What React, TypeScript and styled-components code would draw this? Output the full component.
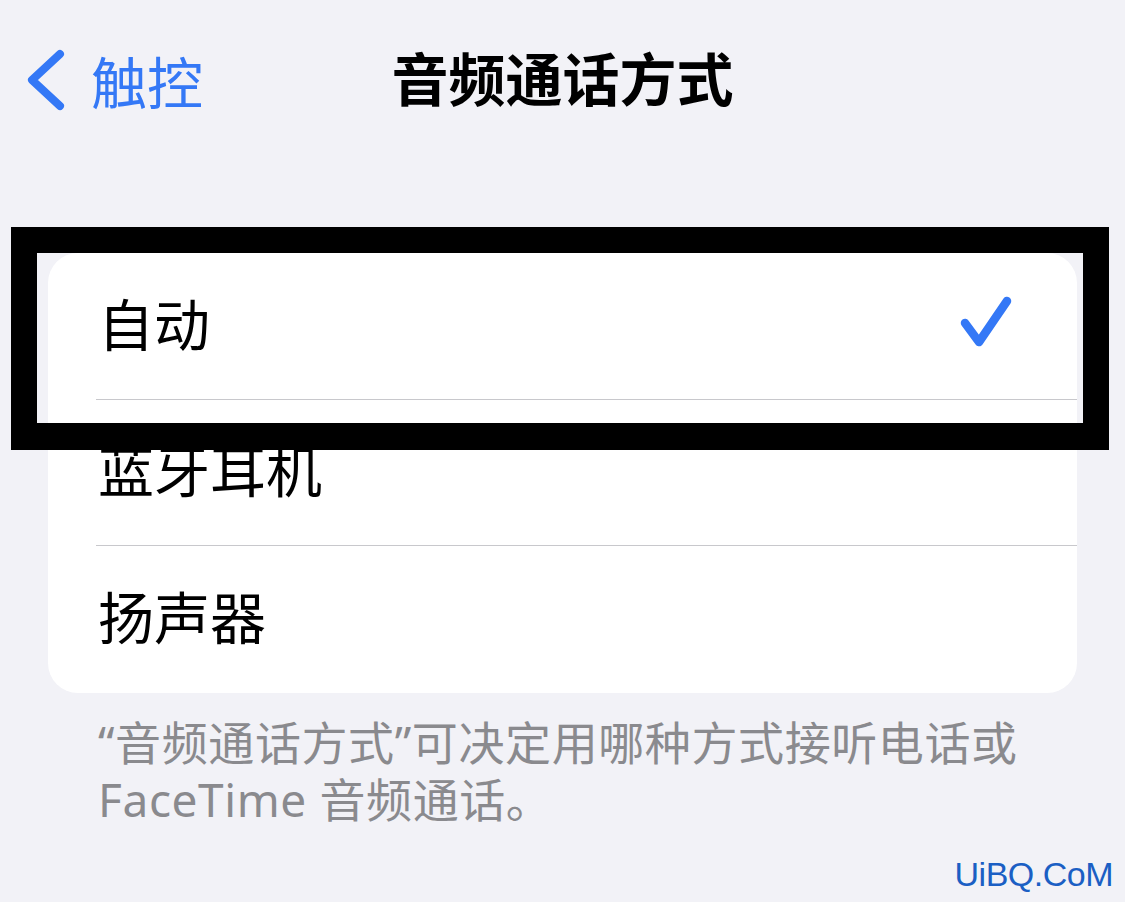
import styled, { createGlobalStyle } from "styled-components";

const GlobalStyle = createGlobalStyle`
  html, body {
    margin: 0;
    padding: 0;
    background: #f2f2f7;
  }
  * {
    box-sizing: border-box;
  }
`;

const options = [
  { label: "自动", selected: true },
  { label: "蓝牙耳机", selected: false },
  { label: "扬声器", selected: false },
];

export default function App() {
  return (
    <>
      <GlobalStyle />
      <StPage>
        <StNavBar>
          <StBackButton>
            <svg width="44" height="64" viewBox="0 0 44 64">
              <polyline
                points="36,6 8,32 36,58"
                fill="none"
                stroke="#3478f6"
                strokeWidth="8"
                strokeLinecap="round"
                strokeLinejoin="round"
              />
            </svg>
            <StBackLabel>触控</StBackLabel>
          </StBackButton>
          <StTitle>音频通话方式</StTitle>
          <div />
        </StNavBar>

        <StGroup>
          {options.map((opt, i) => (
            <StRow key={opt.label}>
              <StRowInner $last={i === options.length - 1}>
                <StRowLabel>{opt.label}</StRowLabel>
                {opt.selected && (
                  <svg width="56" height="56" viewBox="0 0 56 56">
                    <polyline
                      points="8,29 22,48 50,7"
                      fill="none"
                      stroke="#3478f6"
                      strokeWidth="8.5"
                      strokeLinecap="round"
                      strokeLinejoin="round"
                    />
                  </svg>
                )}
              </StRowInner>
            </StRow>
          ))}
        </StGroup>

        <StFooter>
          “音频通话方式”可决定用哪种方式接听电话或
          <br />
          FaceTime 音频通话。
        </StFooter>

        <StHighlight />
        <StWatermark>UiBQ.CoM</StWatermark>
      </StPage>
    </>
  );
}

const StPage = styled.main`
  position: relative;
  width: 1125px;
  height: 902px;
  overflow: hidden;
  background-color: #f2f2f7;
  font-family: "Noto Sans", "Noto Sans CJK SC", sans-serif;
`;

const StNavBar = styled.header`
  height: 160px;
  padding: 44px 24px 0;

  display: grid;
  grid-template-columns: 1fr auto 1fr;
  align-items: start;
`;

const StBackButton = styled.div`
  padding-top: 4px;

  display: flex;
  align-items: center;
  gap: 23px;
`;

const StBackLabel = styled.span`
  color: #3478f6;
  font-family: "Noto Sans CJK SC", sans-serif;
  font-size: 56px;
  line-height: 64px;
`;

const StTitle = styled.h1`
  margin: 0;

  color: #000;
  font-family: "Noto Sans CJK SC", sans-serif;
  font-size: 57px;
  font-weight: 700;
  line-height: 64px;
`;

const StGroup = styled.section`
  margin: 93px 48px 0;

  background: #fff;
  border-radius: 30px;
  overflow: hidden;
`;

const StRow = styled.div`
  padding-left: 48px;
`;

const StRowInner = styled.div<{ $last: boolean }>`
  height: 146.5px;
  padding: 0 64px 8px 2px;

  display: flex;
  align-items: center;
  justify-content: space-between;

  border-bottom: ${({ $last }) => ($last ? "none" : "1px solid #c8c8cc")};
`;

const StRowLabel = styled.span`
  color: #000;
  font-family: "Noto Sans CJK SC", sans-serif;
  font-size: 56px;
  line-height: 64px;
`;

const StFooter = styled.p`
  margin: 21px 0 0;
  padding-left: 98px;

  color: #8a8a8e;
  font-family: "Noto Sans", "Noto Sans CJK SC", sans-serif;
  font-size: 46px;
  line-height: 57px;
  letter-spacing: 0.6px;
`;

const StHighlight = styled.div`
  position: absolute;
  left: 11px;
  top: 227px;
  width: 1098px;
  height: 223px;

  border: 26px solid #000;
  border-bottom-width: 27px;
  pointer-events: none;
`;

const StWatermark = styled.span`
  position: absolute;
  right: 12px;
  bottom: 8px;

  color: #1b5fc4;
  font-family: "Liberation Sans Narrow", "Liberation Sans", sans-serif;
  font-size: 34px;
  letter-spacing: -0.5px;
`;
